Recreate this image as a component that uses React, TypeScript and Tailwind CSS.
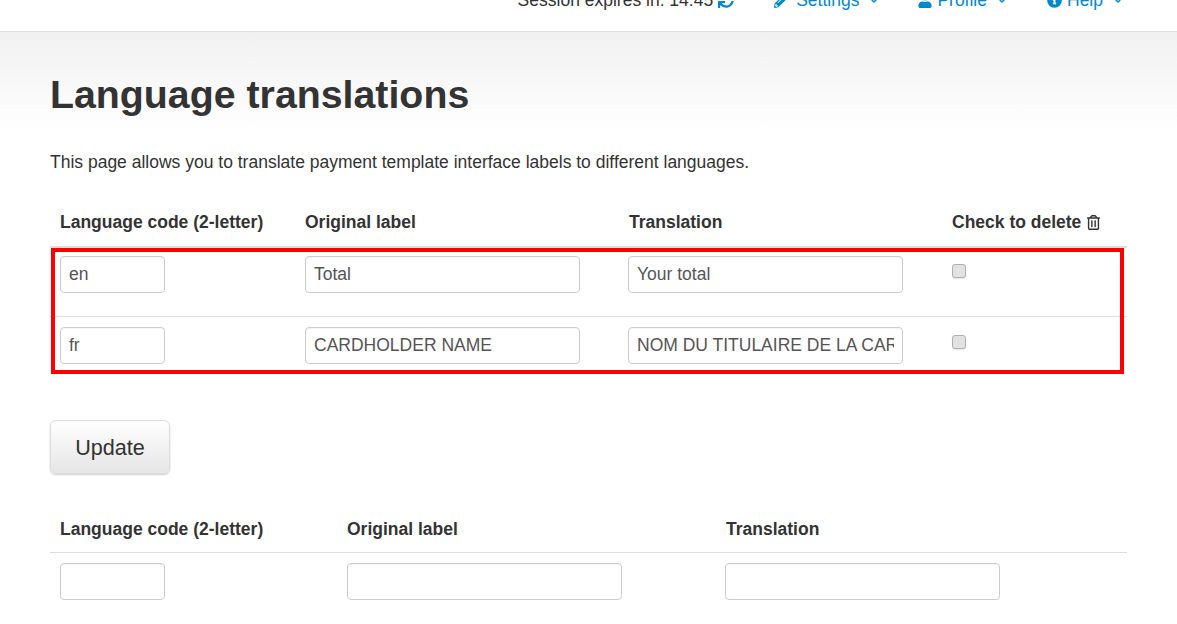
import { FaChevronDown, FaInfoCircle, FaPencilAlt, FaRegTrashAlt, FaSync, FaUser } from "react-icons/fa";

const rows = [
  { code: "en", label: "Total", translation: "Your total" },
  { code: "fr", label: "CARDHOLDER NAME", translation: "NOM DU TITULAIRE DE LA CARTE" },
];

const inputClass =
  "h-[37px] rounded-[4px] border border-[#cccccc] bg-white px-2 text-[17.5px] text-[#555555] outline-none shadow-[inset_0_1px_1px_rgba(0,0,0,0.04)]";

function NavLink({ icon, label, className }: { icon: React.ReactNode; label: string; className?: string }) {
  return (
    <a className={"flex items-center text-[#0088cc] " + (className ?? "")}>
      {icon}
      <span>{label}</span>
      <FaChevronDown className="ml-[10px] w-[10px] h-[9px]" />
    </a>
  );
}

export default function App() {
  return (
    <div className="h-screen overflow-hidden bg-white text-[17.5px] text-[#333333] font-['Liberation_Sans',Arial,sans-serif]">
      {/* Header, scrolled partly out of view */}
      <header className="h-[32px] border-b border-[#dddddd] overflow-hidden">
        <div className="flex justify-end items-center h-[20px] -mt-[10px] pr-[54px] gap-[39px] leading-[20px]">
          <div className="flex items-center gap-[5px]">
            <span>Session expires in: 14:45</span>
            <FaSync className="w-[16px] h-[16px] mr-[1px] text-[#0088cc]" />
          </div>
          <NavLink icon={<FaPencilAlt className="w-[15px] h-[15px] mr-[7px]" />} label="Settings" />
          <NavLink icon={<FaUser className="w-[14px] h-[15px] mr-[5px]" />} label="Profile" />
          <NavLink className="ml-[1px]" icon={<FaInfoCircle className="w-[15px] h-[15px] mr-[5px]" />} label="Help" />
        </div>
      </header>

      <main className="relative px-[50px] bg-gradient-to-b from-[#f1f1f1] to-white to-[100px] bg-no-repeat">
        <h1 className="pt-[39px] text-[39.3px] leading-[46px] font-bold text-[#333333]">
          Language translations
        </h1>
        <p className="mt-[34px] leading-[22px]">
          This page allows you to translate payment template interface labels to different languages.
        </p>

        <table className="mt-[25px] w-[1077px] table-fixed border-collapse">
          <colgroup>
            <col className="w-[245px]" />
            <col className="w-[324px]" />
            <col className="w-[323px]" />
            <col />
          </colgroup>
          <thead>
            <tr className="border-b-2 border-[#dddddd] h-[49px]">
              <th className="px-[10px] text-left font-bold">Language code (2-letter)</th>
              <th className="px-[10px] text-left font-bold">Original label</th>
              <th className="px-[10px] text-left font-bold">Translation</th>
              <th className="px-[10px] text-left font-bold">
                Check to delete <FaRegTrashAlt className="inline w-[15px] h-[15px] -mt-[2px]" />
              </th>
            </tr>
          </thead>
          <tbody>
            {rows.map((row, i) => (
              <tr key={row.code} className={i === 0 ? "border-b border-[#dddddd] h-[69px] align-top" : "h-[70px] align-top"}>
                <td className={i === 0 ? "px-[10px] pt-[8px]" : "px-[10px] pt-[10px]"}>
                  <input readOnly value={row.code} className={inputClass + " w-[105px]"} />
                </td>
                <td className={i === 0 ? "px-[10px] pt-[8px]" : "px-[10px] pt-[10px]"}>
                  <input readOnly value={row.label} className={inputClass + " w-[275px]"} />
                </td>
                <td className={i === 0 ? "px-[10px] pt-[8px]" : "px-[10px] pt-[10px]"}>
                  <input readOnly value={row.translation} className={inputClass + " w-[275px] -ml-px"} />
                </td>
                <td className={i === 0 ? "px-[10px] pt-[16px]" : "px-[10px] pt-[18px]"}>
                  <input type="checkbox" className="block appearance-none w-[14px] h-[14px] rounded-[3px] border border-[#b0b0b0] bg-[#e2e2e2] shadow-[0_1px_1px_rgba(0,0,0,0.1)]" />
                </td>
              </tr>
            ))}
          </tbody>
        </table>

        {/* Red highlight drawn over the table */}
        <div className="absolute left-[51px] top-[216px] w-[1073px] h-[126px] border-[4px] border-[#ff0000] pointer-events-none" />

        <button className="mt-[34px] block w-[120px] h-[54px] pt-[2px] rounded-[6px] border border-[#dddddd] bg-gradient-to-b from-white to-[#e6e6e6] text-[21.6px] text-[#333333] shadow-[0_1px_2px_rgba(0,0,0,0.2)]">
          Update
        </button>

        <table className="mt-[32px] w-[1077px] table-fixed border-collapse">
          <colgroup>
            <col className="w-[287px]" />
            <col className="w-[379px]" />
            <col />
          </colgroup>
          <thead>
            <tr className="border-b border-[#dddddd] h-[46px]">
              <th className="px-[10px] pt-[1px] text-left font-bold">Language code (2-letter)</th>
              <th className="px-[10px] pt-[1px] text-left font-bold">Original label</th>
              <th className="px-[10px] pt-[1px] text-left font-bold">Translation</th>
            </tr>
          </thead>
          <tbody>
            <tr className="align-top">
              <td className="px-[10px] pt-[10px]">
                <input readOnly className={inputClass + " w-[105px]"} />
              </td>
              <td className="px-[10px] pt-[10px]">
                <input readOnly className={inputClass + " w-[275px]"} />
              </td>
              <td className="px-[10px] pt-[10px]">
                <input readOnly className={inputClass + " w-[275px] -ml-px"} />
              </td>
            </tr>
          </tbody>
        </table>
      </main>
    </div>
  );
}
